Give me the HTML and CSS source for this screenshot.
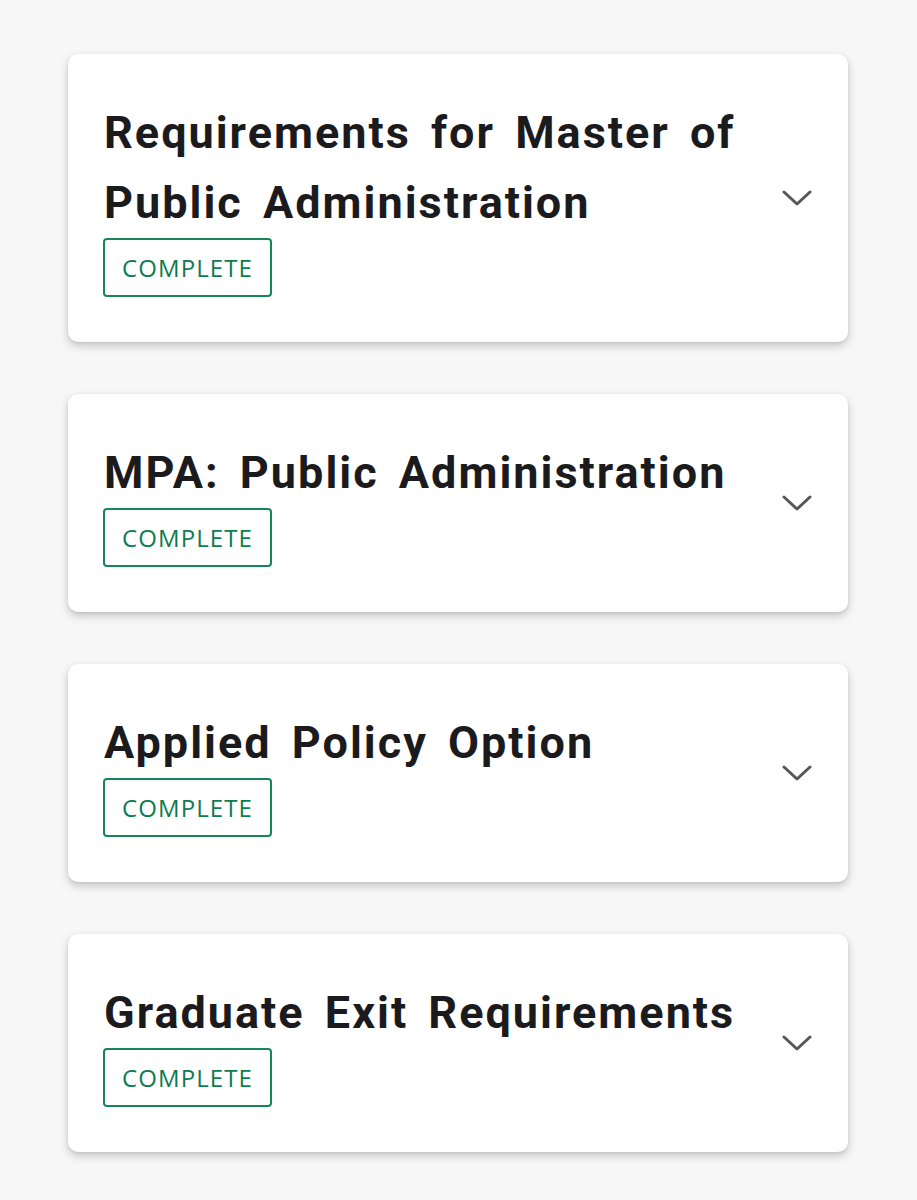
FILE: index.html
```html
<!DOCTYPE html>
<html>
<head>
<meta charset="utf-8">
<link rel="stylesheet" href="styles.css">
</head>
<body>
<main class="list">
  <section class="card">
    <div class="card-body">
      <h2 class="title">Requirements for Master of Public Administration</h2>
      <span class="badge">COMPLETE</span>
    </div>
    <svg class="chev" viewBox="0 0 30 16"><path d="M2 2 L15 14 L28 2"/></svg>
  </section>
  <section class="card">
    <div class="card-body">
      <h2 class="title">MPA: Public Administration</h2>
      <span class="badge">COMPLETE</span>
    </div>
    <svg class="chev" viewBox="0 0 30 16"><path d="M2 2 L15 14 L28 2"/></svg>
  </section>
  <section class="card">
    <div class="card-body">
      <h2 class="title">Applied Policy Option</h2>
      <span class="badge">COMPLETE</span>
    </div>
    <svg class="chev" viewBox="0 0 30 16"><path d="M2 2 L15 14 L28 2"/></svg>
  </section>
  <section class="card">
    <div class="card-body">
      <h2 class="title">Graduate Exit Requirements</h2>
      <span class="badge">COMPLETE</span>
    </div>
    <svg class="chev" viewBox="0 0 30 16"><path d="M2 2 L15 14 L28 2"/></svg>
  </section>
</main>
</body>
</html>
```
FILE: styles.css
```css
html, body {
  margin: 0;
  padding: 0;
  background: #f7f7f7;
}
.list {
  display: flex;
  flex-direction: column;
  gap: 52px;
  padding: 54px 69px 40px 68px;
}
.card {
  background: #fff;
  border-radius: 10px;
  box-shadow: 0 4px 10px rgba(0,0,0,0.2), 0 1px 3px rgba(0,0,0,0.08);
  display: flex;
  align-items: center;
  padding: 44px 35px 45px 35px;
}
.card-body {
  flex: 1;
  min-width: 0;
}
.title {
  margin: 0;
  font-family: Roboto, "Liberation Sans", sans-serif;
  font-weight: 700;
  font-size: 45px;
  line-height: 70px;
  color: #1b1b1d;
  letter-spacing: 2px;
  word-spacing: 7px;
  padding-left: 1px;
  padding-right: 40px;
}
.badge {
  display: inline-block;
  box-sizing: border-box;
  height: 59px;
  width: 169px;
  border: 2px solid #16855a;
  border-radius: 4px;
  color: #0d7c4e;
  font-family: "Open Sans", "Noto Sans", sans-serif;
  font-size: 24px;
  letter-spacing: 1.1px;
  line-height: 55px;
  text-align: center;
}
.chev {
  width: 30px;
  height: 16px;
  flex: none;
  margin-right: 1px;
  fill: none;
  stroke: #56565c;
  stroke-width: 3;
  stroke-linecap: round;
  stroke-linejoin: round;
}
```
